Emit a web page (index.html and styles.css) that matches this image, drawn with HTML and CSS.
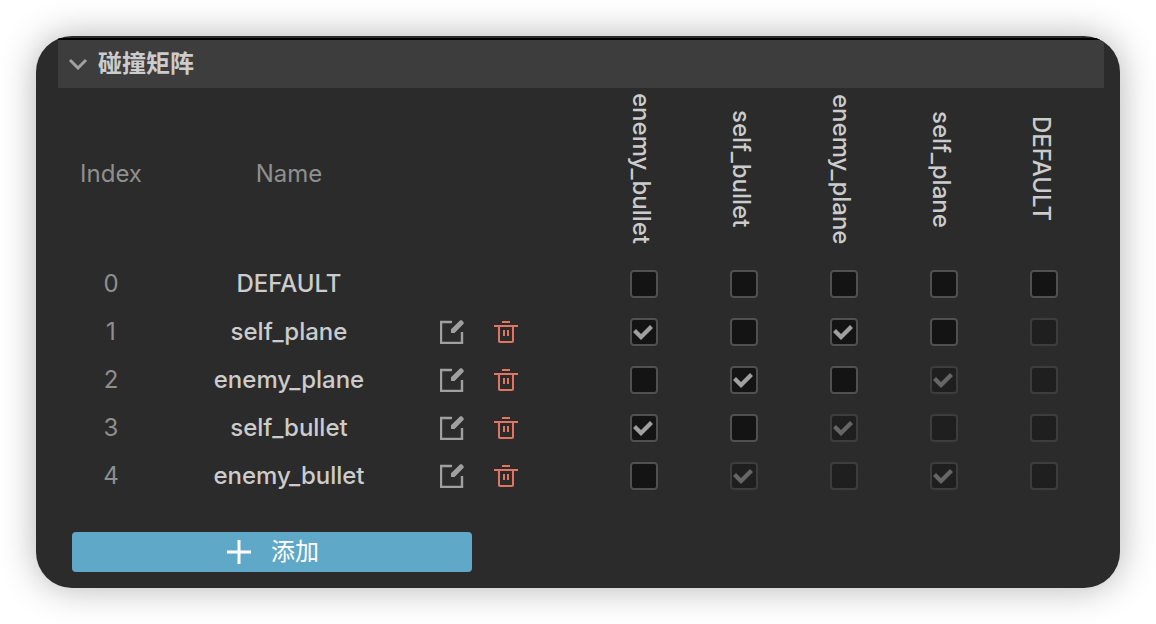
FILE: index.html
```html
<!DOCTYPE html>
<html lang="zh-CN">

<head>
    <meta charset="UTF-8">
    <meta name="viewport" content="width=device-width, initial-scale=1.0">
    <title>碰撞矩阵</title>
    <link rel="stylesheet" href="styles.css">
</head>

<body>
    <svg class="symbols" aria-hidden="true">
        <symbol id="edit" viewBox="0 0 24 24">
            <path d="M12 2H1V23H22V12" fill="none" stroke="currentColor" stroke-width="2.4" />
            <path d="M11 9.2L20 0.6Q21 -0.4 22 0.6L23.4 2Q24.2 3 23.4 4L14.6 12.9H11Z" fill="currentColor" />
        </symbol>
        <symbol id="trash" viewBox="0 0 24 24">
            <path d="M0 6H24M8 2H16M5 6V21Q5 22 6 22H18Q19 22 19 21V6M10 10V16M14 10V16" fill="none"
                stroke="currentColor" stroke-width="2" />
        </symbol>
    </svg>

    <main class="panel">
        <button class="section-head" type="button" aria-expanded="true">
            <svg class="chevron" viewBox="0 0 20 12" aria-hidden="true">
                <path d="M2 2L10 10L18 2" />
            </svg>
            <span>碰撞矩阵</span>
        </button>

        <table class="matrix">
            <colgroup>
                <col class="col-index">
                <col class="col-name">
                <col class="col-actions">
                <col span="5" class="col-check">
            </colgroup>
            <thead>
                <tr>
                    <th scope="col">Index</th>
                    <th scope="col">Name</th>
                    <td></td>
                    <th scope="col" class="group"><span>enemy_bullet</span></th>
                    <th scope="col" class="group"><span>self_bullet</span></th>
                    <th scope="col" class="group"><span>enemy_plane</span></th>
                    <th scope="col" class="group"><span>self_plane</span></th>
                    <th scope="col" class="group"><span>DEFAULT</span></th>
                </tr>
            </thead>
            <tbody>
                <tr>
                    <td class="index">0</td>
                    <th scope="row">DEFAULT</th>
                    <td></td>
                    <td><input type="checkbox" aria-label="DEFAULT / enemy_bullet"></td>
                    <td><input type="checkbox" aria-label="DEFAULT / self_bullet"></td>
                    <td><input type="checkbox" aria-label="DEFAULT / enemy_plane"></td>
                    <td><input type="checkbox" aria-label="DEFAULT / self_plane"></td>
                    <td><input type="checkbox" aria-label="DEFAULT / DEFAULT"></td>
                </tr>
                <tr>
                    <td class="index">1</td>
                    <th scope="row">self_plane</th>
                    <td>
                        <div class="actions">
                            <button class="edit" type="button" aria-label="编辑 self_plane"><svg><use href="#edit" /></svg></button>
                            <button class="delete" type="button" aria-label="删除 self_plane"><svg><use href="#trash" /></svg></button>
                        </div>
                    </td>
                    <td><input type="checkbox" aria-label="self_plane / enemy_bullet" checked></td>
                    <td><input type="checkbox" aria-label="self_plane / self_bullet"></td>
                    <td><input type="checkbox" aria-label="self_plane / enemy_plane" checked></td>
                    <td><input type="checkbox" aria-label="self_plane / self_plane"></td>
                    <td><input type="checkbox" aria-label="self_plane / DEFAULT" disabled></td>
                </tr>
                <tr>
                    <td class="index">2</td>
                    <th scope="row">enemy_plane</th>
                    <td>
                        <div class="actions">
                            <button class="edit" type="button" aria-label="编辑 enemy_plane"><svg><use href="#edit" /></svg></button>
                            <button class="delete" type="button" aria-label="删除 enemy_plane"><svg><use href="#trash" /></svg></button>
                        </div>
                    </td>
                    <td><input type="checkbox" aria-label="enemy_plane / enemy_bullet"></td>
                    <td><input type="checkbox" aria-label="enemy_plane / self_bullet" checked></td>
                    <td><input type="checkbox" aria-label="enemy_plane / enemy_plane"></td>
                    <td><input type="checkbox" aria-label="enemy_plane / self_plane" checked disabled></td>
                    <td><input type="checkbox" aria-label="enemy_plane / DEFAULT" disabled></td>
                </tr>
                <tr>
                    <td class="index">3</td>
                    <th scope="row">self_bullet</th>
                    <td>
                        <div class="actions">
                            <button class="edit" type="button" aria-label="编辑 self_bullet"><svg><use href="#edit" /></svg></button>
                            <button class="delete" type="button" aria-label="删除 self_bullet"><svg><use href="#trash" /></svg></button>
                        </div>
                    </td>
                    <td><input type="checkbox" aria-label="self_bullet / enemy_bullet" checked></td>
                    <td><input type="checkbox" aria-label="self_bullet / self_bullet"></td>
                    <td><input type="checkbox" aria-label="self_bullet / enemy_plane" checked disabled></td>
                    <td><input type="checkbox" aria-label="self_bullet / self_plane" disabled></td>
                    <td><input type="checkbox" aria-label="self_bullet / DEFAULT" disabled></td>
                </tr>
                <tr>
                    <td class="index">4</td>
                    <th scope="row">enemy_bullet</th>
                    <td>
                        <div class="actions">
                            <button class="edit" type="button" aria-label="编辑 enemy_bullet"><svg><use href="#edit" /></svg></button>
                            <button class="delete" type="button" aria-label="删除 enemy_bullet"><svg><use href="#trash" /></svg></button>
                        </div>
                    </td>
                    <td><input type="checkbox" aria-label="enemy_bullet / enemy_bullet"></td>
                    <td><input type="checkbox" aria-label="enemy_bullet / self_bullet" checked disabled></td>
                    <td><input type="checkbox" aria-label="enemy_bullet / enemy_plane" disabled></td>
                    <td><input type="checkbox" aria-label="enemy_bullet / self_plane" checked disabled></td>
                    <td><input type="checkbox" aria-label="enemy_bullet / DEFAULT" disabled></td>
                </tr>
            </tbody>
        </table>

        <button class="add" type="button">
            <svg viewBox="0 0 24 24" aria-hidden="true">
                <path d="M12 0V24M0 12H24" />
            </svg>
            <span>添加</span>
        </button>
    </main>
</body>

</html>
```

FILE: styles.css
```css
* {
    box-sizing: border-box;
}

body {
    margin: 0;
    padding: 36px;
    background: #fff;
    color: #ccc;
    font-family: Inter, "Noto Sans CJK SC", sans-serif;
    font-size: 24px;
    line-height: 32px;
}

button {
    padding: 0;
    border: none;
    background: none;
    color: inherit;
    font: inherit;
    cursor: pointer;
}

svg {
    display: block;
}

.symbols {
    display: none;
}

.panel {
    padding: 2px 16px 16px 22px;
    overflow: hidden;
    background: #2b2b2b;
    border-radius: 36px;
    box-shadow: 0 0 36px rgba(0, 0, 0, 0.3);
}

.section-head {
    display: flex;
    align-items: center;
    gap: 10px;
    width: 100%;
    height: 50px;
    padding: 0 10px;
    border-top: 2px solid #000;
    background: #3d3d3d;
    font-weight: 700;
}

.chevron {
    width: 20px;
    height: 12px;
    fill: none;
    stroke: #a0a0a0;
    stroke-width: 3;
}

.matrix {
    width: calc(100% - 10px);
    table-layout: fixed;
    border-collapse: collapse;
    text-align: center;
}

.col-index {
    width: 106px;
}

.col-name {
    width: 250px;
}

.col-actions {
    width: 180px;
}

.col-check {
    width: 100px;
}

.matrix th,
.matrix td {
    height: 48px;
    padding: 0;
    font-weight: 400;
    vertical-align: middle;
}

.matrix tbody th {
    font-weight: 500;
}

.matrix thead th {
    height: 172px;
    color: #8f8f8f;
}

.matrix thead .group {
    padding: 0 6px 10px 0;
    color: #ccc;
    font-weight: 500;
}

.group span {
    display: inline-block;
    vertical-align: middle;
    writing-mode: vertical-rl;
}

.matrix .index {
    color: #8f8f8f;
}

.actions {
    display: flex;
    gap: 30px;
    padding-left: 26px;
}

.actions svg {
    width: 24px;
    height: 24px;
}

.edit {
    color: #a0a0a0;
}

.delete {
    color: #e07564;
}

.matrix input {
    display: block;
    width: 28px;
    height: 28px;
    margin: 0 auto;
    appearance: none;
    border: 2px solid #505050;
    border-radius: 4px;
    background: #141414;
}

.matrix input:checked::before {
    content: "";
    display: block;
    width: 24px;
    height: 24px;
    background: #a0a0a0;
    clip-path: polygon(1px 12px, 4px 9px, 9px 14px, 18px 5px, 21px 8px, 9px 20px);
}

.matrix input:disabled {
    border-color: #3d3d3d;
    background: #1f1f1f;
}

.matrix input:disabled::before {
    background: #666;
}

.add {
    display: flex;
    align-items: center;
    justify-content: center;
    gap: 20px;
    width: 400px;
    max-width: 100%;
    height: 40px;
    margin: 32px 0 0 14px;
    padding-left: 2px;
    border-radius: 4px;
    background: #5fa8c7;
    color: #fff;
}

.add svg {
    width: 24px;
    height: 24px;
    stroke: currentColor;
    stroke-width: 3;
}
```
